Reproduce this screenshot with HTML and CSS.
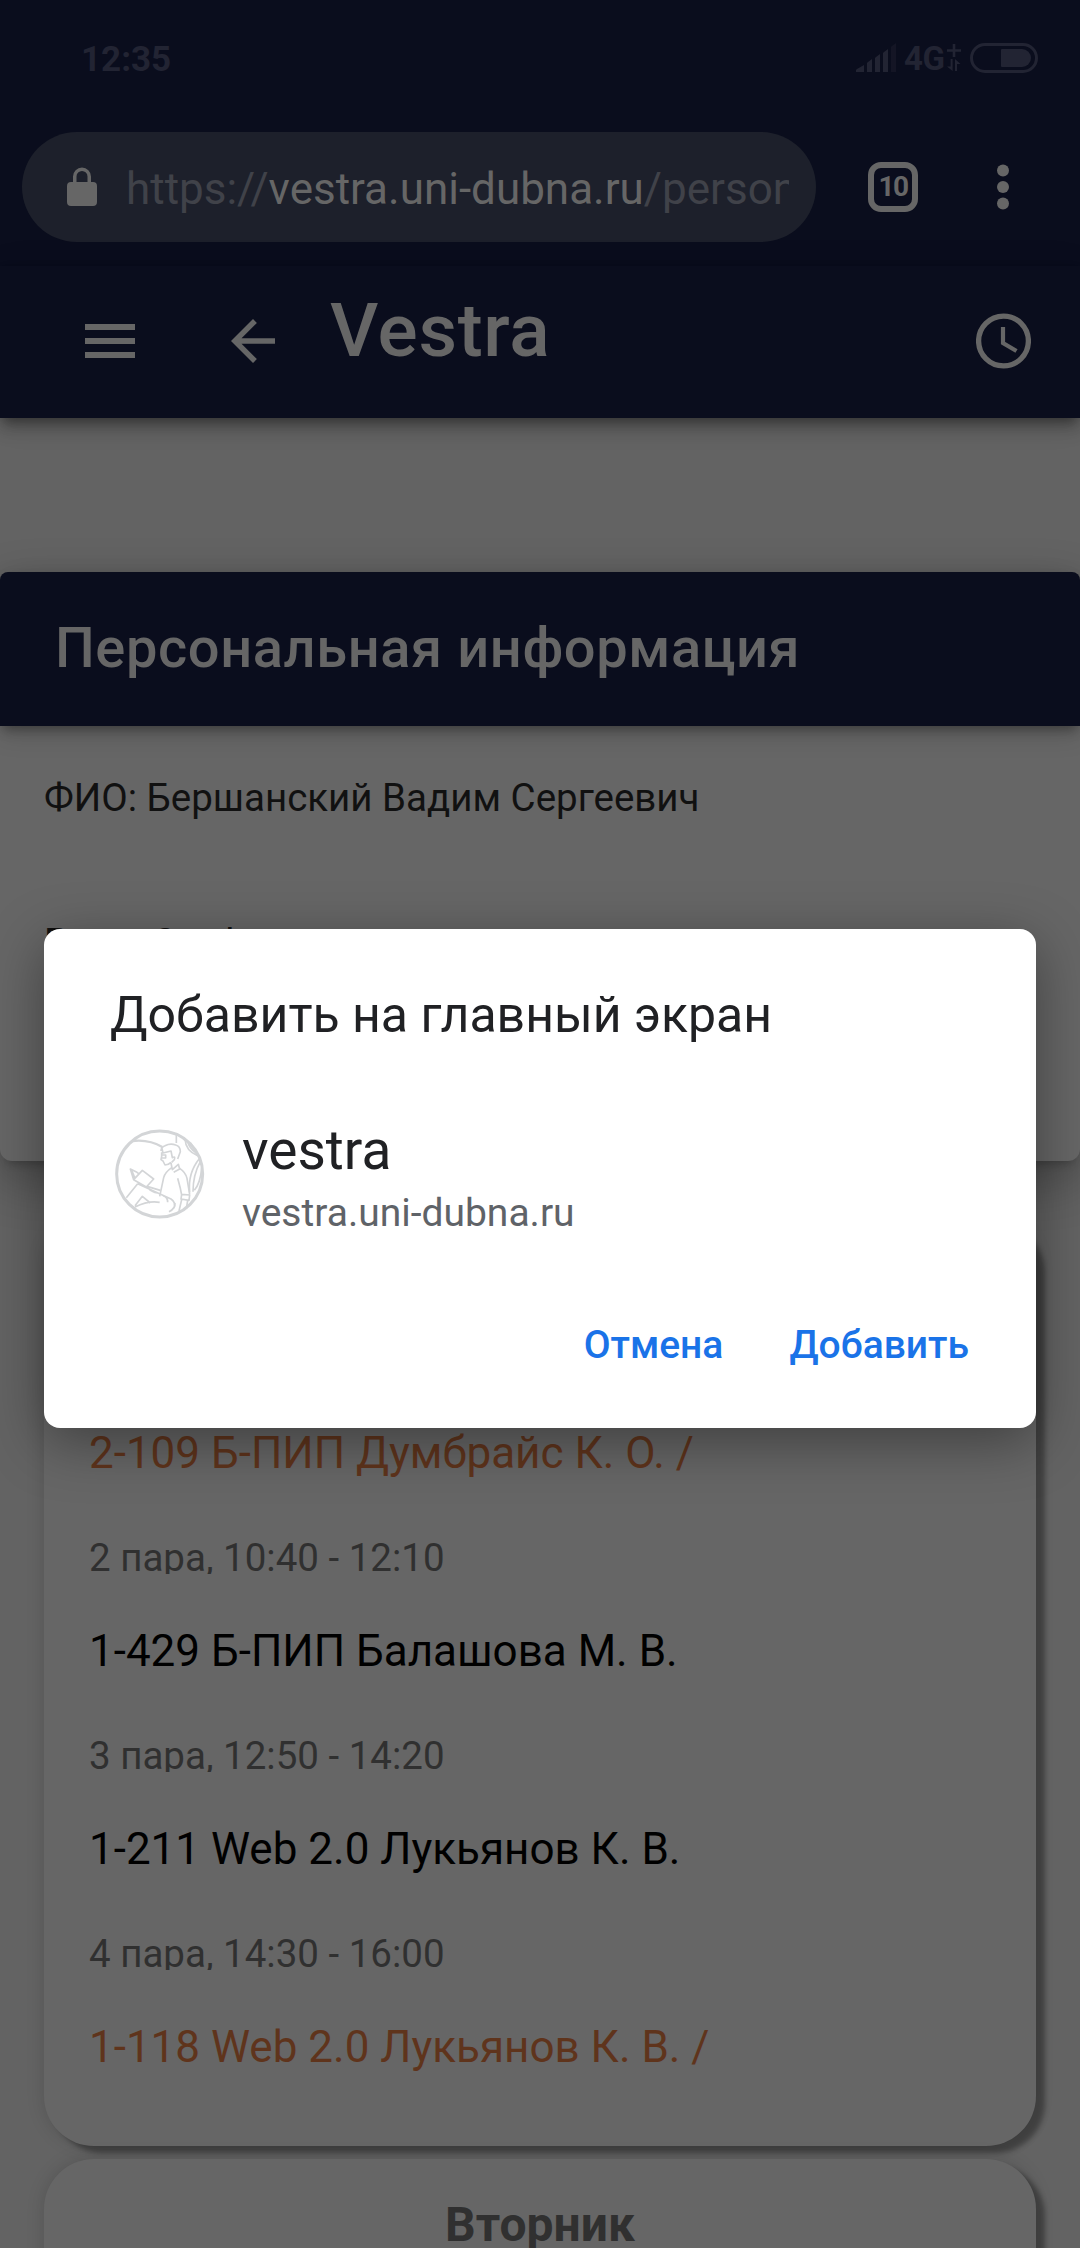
FILE: index.html
```html
<!DOCTYPE html>
<html lang="ru">
<head>
<meta charset="utf-8">
<title>Vestra</title>
<link rel="stylesheet" href="styles.css">
</head>
<body>
<div class="screen">
  <div class="chrome">
    <div class="status">
      <span class="time">12:35</span>
      <svg class="signal" width="41" height="30" viewBox="0 0 41 30"><path d="M1 26l7-4v7H0v-2zM12 19l4-3v13h-5v-9zM20 14l4-3v18h-5V15zM28 9l4-3v23h-5V10z"/><path opacity=".4" d="M36 3l4-3v29h-5V4z"/></svg>
      <span class="net">4G</span>
      <svg class="arrows" width="14" height="28" viewBox="0 0 14 28"><path d="M5.700 0h2.600v5.200H14v2.600H8.300V13H5.700V7.800H0V5.200h5.700zM3.600 15h2v12L0 22.500h3.600zM8 15l5.500 5H10v7H8z"/></svg>
      <svg class="battery" width="68" height="30" viewBox="0 0 68 30"><rect x="1.500" y="1.500" width="65" height="27" rx="13.500" fill="none" stroke="#222433" stroke-width="3"/><path d="M32 6h20a9 9 0 0 1 9 9 9 9 0 0 1-9 9H32q-1 0-1-1V7q0-1 1-1z"/></svg>
    </div>
    <div class="toolbar">
      <div class="url">
        <svg class="lock" width="30" height="40" viewBox="0 0 30 40"><path d="M6 15V9.500a9 9 0 0 1 18 0V15h2a4 4 0 0 1 4 4v16a4 4 0 0 1-4 4H4a4 4 0 0 1-4-4V19a4 4 0 0 1 4-4zm3.500 0h11V9.500a5.500 5.500 0 0 0-11 0z"/></svg>
        <div class="address">https://<b>vestra.uni-dubna.ru</b>/personal</div>
      </div>
      <div class="tabs">10</div>
      <svg class="dots" width="12" height="46" viewBox="0 0 12 46"><circle cx="6" cy="6.500" r="6"/><circle cx="6" cy="23" r="6"/><circle cx="6" cy="39.500" r="6"/></svg>
    </div>
  </div>
  <header class="appbar">
    <svg class="menu" width="50" height="34" viewBox="0 0 50 34"><path d="M0 0h50v6H0zM0 14h50v6H0zM0 28h50v6H0z"/></svg>
    <svg class="back" width="44" height="44" viewBox="0 0 16 16"><path d="M16 7H3.830l5.590-5.590L8 0 0 8l8 8 1.410-1.410L3.830 9H16z"/></svg>
    <h1>Vestra</h1>
    <svg class="clock" width="55" height="56" viewBox="0 0 55 56"><circle cx="27.500" cy="28" r="24.900" fill="none" stroke="#666" stroke-width="5.300"/><path d="M27 14v16l13.500 8" fill="none" stroke="#666" stroke-width="4.200"/></svg>
  </header>
  <main>
    <section class="person">
      <h2>Персональная информация</h2>
      <p>ФИО: Бершанский Вадим Сергеевич</p>
      <p class="second">Роль: Стаф</p>
    </section>
    <section class="day">
      <p class="lesson alt">2-109 Б-ПИП Думбрайс К. О. /</p>
      <p class="slot">2 пара, 10:40 - 12:10</p>
      <p class="lesson">1-429 Б-ПИП Балашова М. В.</p>
      <p class="slot">3 пара, 12:50 - 14:20</p>
      <p class="lesson">1-211 Web 2.0 Лукьянов К. В.</p>
      <p class="slot">4 пара, 14:30 - 16:00</p>
      <p class="lesson alt">1-118 Web 2.0 Лукьянов К. В. /</p>
    </section>
    <section class="day next"><h3>Вторник</h3></section>
  </main>
  <div class="dialog" role="dialog">
    <h4>Добавить на главный экран</h4>
    <div class="app">
      <svg class="logo" width="90" height="90" viewBox="46 58 270 270" fill="none" stroke="#d3d5d7" stroke-width="5" stroke-linejoin="round">
        <circle cx="180" cy="193" r="129" stroke-width="9"/>
        <path stroke-width="7" d="M98 94q50-6 90 18"/>
        <path d="M230 70v30M256 88q2 36 38 50M264 94q4 22 26 36M272 100l18 26M300 146q-36 44-30 102M302 156q-22 40-22 90M306 176q-4 44-22 66"/>
        <path d="M184 124q0-12 12-16 16-8 32-2 14 4 14 20l-8 22M186 112l4 18 24-6 4 20q10-6 6 6l-8 8M186 128v12l-2 10 6 4 6 12q10 0 18-8M188 136h10v9h-12M214 160l4 20 18-16 4 14-18 10"/>
        <path d="M216 174q-20 14-24 30l-12 56M240 176q18 12 22 30l8 48M234 206l8 30 4 20M246 254l24 2-2 16-24-4zM246 270l-8 34M264 272l-4 26"/>
        <path d="M102 210l26-28 34 26-22 24zM102 210l-10-32 20 10 8 6M96 182l10 24M142 230l40 12M146 236q10 12 28 14M114 222l-34 42M114 222l100 46q16 10 8 28M106 288l22-28 24 20M106 292q40-20 74-14M190 258q14 4 14 20M226 280q2 16-18 26"/>
      </svg>
      <div class="info"><div class="name">vestra</div><div class="host">vestra.uni-dubna.ru</div></div>
    </div>
    <div class="actions"><span>Отмена</span><span>Добавить</span></div>
  </div>
</div>
</body>
</html>
```
FILE: styles.css
```css
* { box-sizing: border-box; margin: 0; padding: 0; }
body { width: 1080px; height: 2248px; overflow: hidden; background: #636363; font-family: Roboto, "Liberation Sans", sans-serif; }
svg { display: block; flex: none; }
.screen { position: relative; width: 1080px; height: 2248px; overflow: hidden; white-space: nowrap; }
.chrome { height: 266px; background: #0a0d1d; }
.status { height: 117px; display: flex; padding: 43px 42px 0 81px; color: #222433; fill: #222433; font-weight: 700; }
.time { flex: 1; font-size: 35px; line-height: 33px; }
.signal { margin-right: 7px; }
.net { width: 40px; font-size: 33px; line-height: 32px; letter-spacing: -.5px; }
.arrows { margin: 1px 9px 0 3px; }
.toolbar { display: flex; align-items: center; height: 140px; padding-left: 22px; }
.url { display: flex; align-items: center; width: 794px; height: 110px; padding: 0 27px 0 45px; border-radius: 55px; background: #1d202b; }
.lock { fill: #666; margin-right: 29px; }
.address { flex: 1; overflow: hidden; font-size: 44px; line-height: 60px; color: #404249; padding-top: 3px; }
.address b { font-weight: 400; color: #666; }
.tabs { width: 50px; height: 50px; margin-left: 52px; border: 6px solid #666; border-radius: 13px; color: #666; font-weight: 700; font-size: 28px; line-height: 37px; text-align: center; letter-spacing: -1.5px; }
.dots { margin-left: 79px; fill: #666; }
.appbar { position: relative; display: flex; align-items: flex-start; height: 152px; padding: 0 49px 0 85px; background: #0a0d1d; fill: #666; color: #666; box-shadow: 0 6px 12px -3px rgba(0,0,0,.4), 0 12px 15px rgba(0,0,0,.12), 0 3px 30px rgba(0,0,0,.12); }
.menu { margin-top: 58px; }
.back { margin: 53px 0 0 96px; }
h1 { flex: 1; margin: 20px 0 0 55px; font-size: 75px; line-height: 88px; font-weight: 500; letter-spacing: .7px; }
.clock { margin-top: 47px; }
main { padding-top: 154px; }
.person { position: relative; z-index: 1; height: 589px; border-radius: 12px; background: #666; box-shadow: 0 9px 9px -6px rgba(0,0,0,.2), 0 18px 50px rgba(0,0,0,.3); }
h2 { height: 154px; padding: 0 55px; border-radius: 8px 8px 0 0; background: #0a0d1d; color: #666; font-size: 56px; line-height: 152px; font-weight: 500; letter-spacing: .6px; box-shadow: 0 6px 12px -3px rgba(0,0,0,.35), 0 9px 24px rgba(0,0,0,.15); }
.person p { padding: 47px 44px 0; color: #111; font-size: 38.5px; line-height: 50px; }
.person .second { padding-top: 95px; }
.day { width: 992px; height: 930px; margin: 55px auto 0; padding: 202px 45px 0; border-radius: 50px; background: #666; box-shadow: 9px 7px 5px rgba(0,0,0,.32), 0 0 18px rgba(0,0,0,.15); }
.lesson { height: 70px; color: #000; font-size: 44px; line-height: 70px; }
.lesson.alt { color: #5f341c; }
.slot { height: 40px; margin: 46px 0 42px; overflow: hidden; color: #303030; font-size: 38.5px; line-height: 47px; }
.day.next { margin-top: 13px; padding-top: 36px; text-align: center; }
h3 { color: #303030; font-size: 48px; line-height: 60px; font-weight: 700; }
.dialog { position: absolute; z-index: 2; left: 44px; top: 929px; width: 992px; height: 499px; padding: 56px 67px 0 66px; border-radius: 16px; background: #fff; box-shadow: 0 14px 56px rgba(0,0,0,.38); }
h4 { font-size: 50px; line-height: 60px; font-weight: 400; color: #202124; }
.app { display: flex; margin-top: 84px; padding-left: 5px; }
.info { margin: -11px 0 0 37px; }
.name { font-size: 55px; line-height: 64px; color: #202124; }
.host { font-size: 39px; line-height: 62px; color: #5f6368; }
.actions { display: flex; justify-content: flex-end; gap: 66px; margin-top: 76px; color: #1a73e8; font-size: 39px; line-height: 50px; font-weight: 500; }
```
